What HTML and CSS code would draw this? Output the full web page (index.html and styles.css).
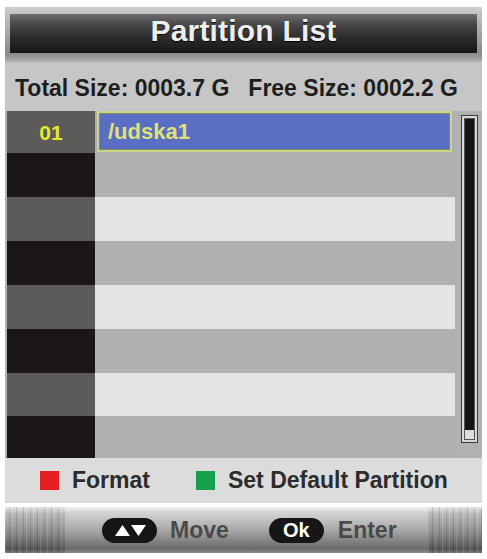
FILE: index.html
```html
<!DOCTYPE html>
<html>
<head>
<meta charset="utf-8">
<title>Partition List</title>
<link rel="stylesheet" href="styles.css">
</head>
<body>
<div class="screen">
  <div class="panel">
    <div class="top">
      <div class="titlebar"><span class="title">Partition List</span></div>
    </div>
    <div class="info">
      <span>Total Size: 0003.7 G</span>
      <span>Free Size: 0002.2 G</span>
    </div>
    <div class="list">
      <div class="rows">
        <div class="num n-odd">01</div>
        <div class="cell c-dark"><div class="selected">/udska1</div></div>
        <div class="num n-even"></div><div class="cell c-dark"></div>
        <div class="num n-odd"></div><div class="cell c-light"></div>
        <div class="num n-even"></div><div class="cell c-dark"></div>
        <div class="num n-odd"></div><div class="cell c-light"></div>
        <div class="num n-even"></div><div class="cell c-dark"></div>
        <div class="num n-odd"></div><div class="cell c-light"></div>
        <div class="num n-even"></div><div class="cell c-dark"></div>
      </div>
      <div class="scroll"><div class="track"><div class="thumb"></div></div></div>
    </div>
    <div class="legend">
      <span class="key red"></span><span class="ltext">Format</span>
      <span class="key green"></span><span class="ltext">Set Default Partition</span>
    </div>
  </div>
  <div class="footer">
    <div class="cap cap-left"></div>
    <div class="fmid">
      <span class="badge">
        <svg width="55" height="25" viewBox="0 0 55 25"><polygon points="13,18 20.5,7 28,18" fill="#fff"/><polygon points="29,7 44,7 36.5,18" fill="#fff"/></svg>
      </span>
      <span class="ftext move">Move</span>
      <span class="badge ok">Ok</span>
      <span class="ftext enter">Enter</span>
    </div>
    <div class="cap cap-right"></div>
  </div>
</div>
</body>
</html>
```
FILE: styles.css
```css
html, body {
  margin: 0;
  padding: 0;
  background: #ffffff;
}
body {
  font-family: "Liberation Sans", Arial, sans-serif;
  font-weight: bold;
}
.screen {
  margin: 7px 0 0 5px;
  width: 477px;
}
.panel {
  background: #b1b1b1;
}
.top {
  background: linear-gradient(to bottom, #cfcfcf 0px, #c2c2c2 7px, #8a8a8a 46px, #9a9a9a 51px, #bdbdbd 56px);
  padding: 7px 5px 10px 5px;
}
.titlebar {
  height: 39px;
  background: linear-gradient(to bottom, #6e6e6e 0%, #4a4a4a 25%, #2c2c2c 60%, #161616 100%);
  text-align: center;
  box-sizing: border-box;
  padding-top: 2px;
}
.title {
  font-size: 30px;
  line-height: 30px;
  color: #eeeeee;
  text-shadow: 0 1px 1px #000;
  letter-spacing: 0.2px;
}
.info {
  background: #c6c6c6;
  height: 48px;
  box-sizing: border-box;
  padding: 14px 0 0 10px;
  display: flex;
  gap: 19px;
  font-size: 23px;
  line-height: 23px;
  color: #1e1e1e;
}
.list {
  display: flex;
  padding-left: 2px;
  background: #b1b1b1;
}
.rows {
  display: grid;
  grid-template-columns: 88px 360px;
  grid-template-rows: 42px 44px 44px 44px 44px 44px 43px 42px;
}
.num {
  display: flex;
  align-items: center;
  justify-content: center;
  color: #e6e82e;
  font-size: 21px;
  line-height: 21px;
}
.n-odd { background: #5d5b59; }
.n-even { background: #1b1716; }
.c-dark { background: #b0b0b0; }
.c-light { background: #e4e4e2; }
.selected {
  margin: 0 3px 1px 2px;
  height: 41px;
  box-sizing: border-box;
  border: 2px solid #c8d58c;
  box-shadow: inset 0 0 0 1px #7f8c4e;
  background: #5a6fc3;
  color: #dfe277;
  font-size: 22px;
  line-height: 22px;
  display: flex;
  align-items: center;
  padding-left: 9px;
}
.scroll {
  margin: 4px 0 0 6px;
  width: 17px;
  height: 328px;
  box-sizing: border-box;
  border: 1px solid #3a3a3a;
  background: #d8d8d8;
  padding: 2px;
}
.track {
  height: 100%;
  background: #141414;
  border: 1px solid #555;
  box-sizing: border-box;
  display: flex;
  flex-direction: column;
  justify-content: flex-end;
}
.thumb {
  height: 9px;
  background: #dedede;
}
.legend {
  height: 45px;
  background: #dcdcdc;
  display: flex;
  align-items: center;
  padding-left: 35px;
  font-size: 23px;
  line-height: 23px;
  color: #2c2c2c;
}
.key {
  width: 19px;
  height: 19px;
  margin-right: 13px;
}
.red { background: #e41d20; }
.green { background: #14a04c; margin-left: 46px; }
.footer {
  margin-top: 4px;
  height: 46px;
  display: flex;
  background: linear-gradient(to bottom, #f2f2f2 0%, #d4d4d4 12%, #a8a8a8 50%, #6a6a6a 90%, #8c8c8c 100%);
}
.cap {
  background:
    repeating-linear-gradient(to right, rgba(255,255,255,0.12) 0 1px, rgba(0,0,0,0) 1px 4px, rgba(0,0,0,0.12) 4px 5px, rgba(0,0,0,0) 5px 7px),
    linear-gradient(to bottom, #e6e6e6 0%, #b8b8b8 15%, #8e8e8e 55%, #555555 92%, #7a7a7a 100%);
}
.cap-left { width: 60px; }
.cap-right { width: 54px; }
.fmid {
  flex: 1;
  display: flex;
  align-items: center;
  padding-left: 37px;
}
.badge {
  width: 55px;
  height: 25px;
  border-radius: 13px;
  background: #161616;
  display: flex;
  align-items: center;
  justify-content: center;
  color: #ffffff;
  font-size: 20px;
  line-height: 20px;
}
.badge svg { display: block; }
.ftext {
  font-size: 23px;
  line-height: 23px;
  color: #4a4a4a;
}
.move { margin-left: 13px; margin-right: 40px; }
.enter { margin-left: 14px; }
```
